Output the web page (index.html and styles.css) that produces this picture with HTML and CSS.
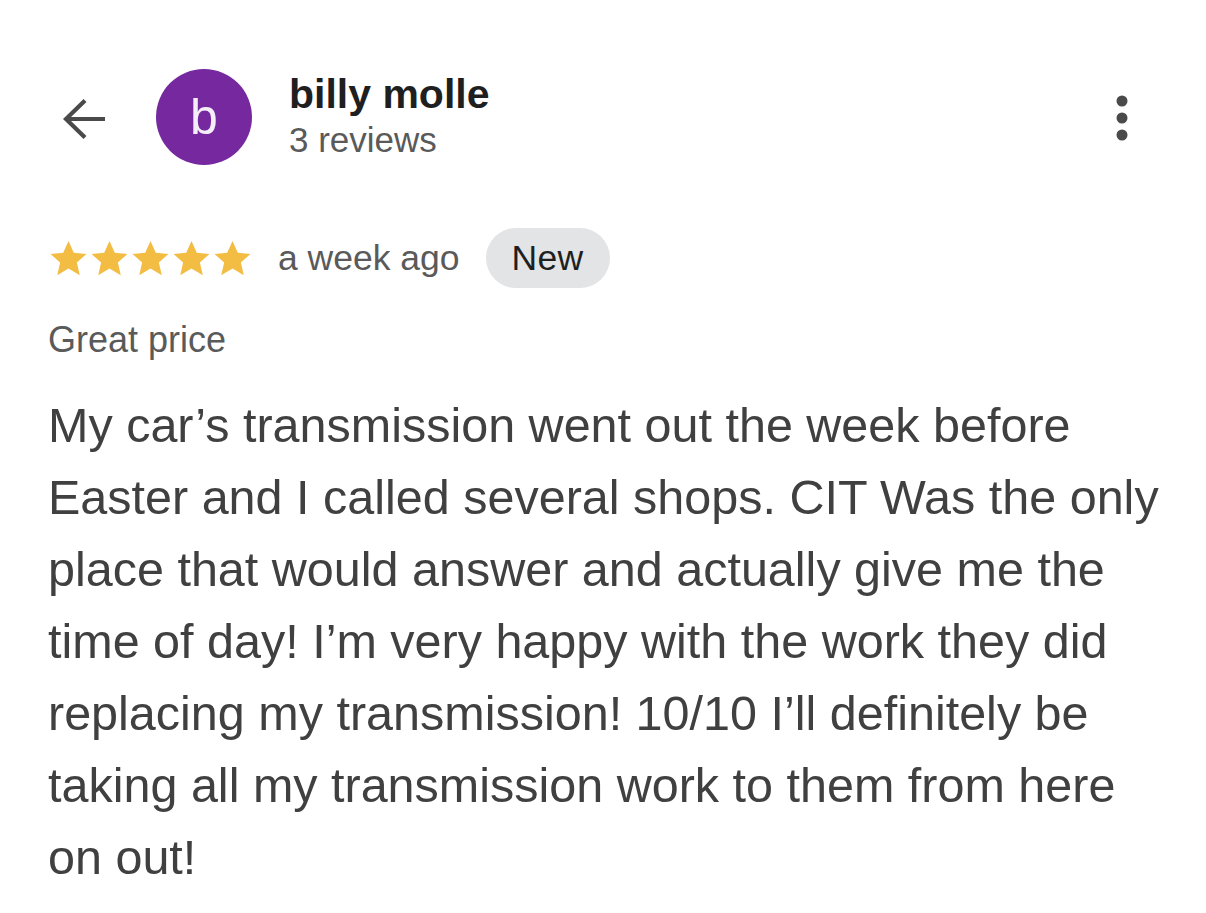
FILE: index.html
```html
<!DOCTYPE html>
<html>
<head>
<meta charset="utf-8">
<link rel="stylesheet" href="styles.css">
</head>
<body>
<div class="page">
  <header class="header">
    <svg class="back" viewBox="0 0 48 48" width="48" height="48"><path d="M45 24H8M25 5.5L6 24l19 18.5" fill="none" stroke="#4a4a4a" stroke-width="4.2" stroke-linecap="butt" stroke-linejoin="miter"/></svg>
    <div class="avatar">b</div>
    <div class="who">
      <div class="name">billy molle</div>
      <div class="count">3 reviews</div>
    </div>
    <svg class="more" viewBox="0 0 12 46" width="12" height="46"><circle cx="6" cy="6" r="5.5" fill="#4a4a4a"/><circle cx="6" cy="23" r="5.5" fill="#4a4a4a"/><circle cx="6" cy="40" r="5.5" fill="#4a4a4a"/></svg>
  </header>
  <div class="meta">
    <div class="stars">
      <svg viewBox="0 0 24 24" width="41" height="41"><path d="M12 1.8l3.1 6.9 7.4.7-5.6 5 1.7 7.4L12 17.9l-6.6 3.9 1.7-7.4-5.6-5 7.4-.7z" fill="#f3bd44"/></svg>
      <svg viewBox="0 0 24 24" width="41" height="41"><path d="M12 1.8l3.1 6.9 7.4.7-5.6 5 1.7 7.4L12 17.9l-6.6 3.9 1.7-7.4-5.6-5 7.4-.7z" fill="#f3bd44"/></svg>
      <svg viewBox="0 0 24 24" width="41" height="41"><path d="M12 1.8l3.1 6.9 7.4.7-5.6 5 1.7 7.4L12 17.9l-6.6 3.9 1.7-7.4-5.6-5 7.4-.7z" fill="#f3bd44"/></svg>
      <svg viewBox="0 0 24 24" width="41" height="41"><path d="M12 1.8l3.1 6.9 7.4.7-5.6 5 1.7 7.4L12 17.9l-6.6 3.9 1.7-7.4-5.6-5 7.4-.7z" fill="#f3bd44"/></svg>
      <svg viewBox="0 0 24 24" width="41" height="41"><path d="M12 1.8l3.1 6.9 7.4.7-5.6 5 1.7 7.4L12 17.9l-6.6 3.9 1.7-7.4-5.6-5 7.4-.7z" fill="#f3bd44"/></svg>
    </div>
    <span class="when">a week ago</span>
    <span class="badge">New</span>
  </div>
  <div class="subtitle">Great price</div>
  <p class="body">My car’s transmission went out the week before Easter and I called several shops. CIT Was the only place that would answer and actually give me the time of day! I’m very happy with the work they did replacing my transmission! 10/10 I’ll definitely be taking all my transmission work to them from here on out!</p>
</div>
</body>
</html>
```
FILE: styles.css
```css
html, body {
  margin: 0;
  padding: 0;
  background: #ffffff;
}
body {
  font-family: "Liberation Sans", Arial, sans-serif;
  color: #3d3d3d;
}
.page {
  width: 1206px;
  height: 913px;
  overflow: hidden;
  box-sizing: border-box;
  padding: 69px 0 0 48px;
}
.header {
  display: flex;
  align-items: center;
  height: 96px;
  padding-right: 78px;
}
.back {
  margin-left: 12px;
  margin-top: 4px;
  flex: none;
}
.avatar {
  margin-left: 48px;
  width: 96px;
  height: 96px;
  border-radius: 50%;
  background: #76289f;
  color: #f4eef8;
  font-size: 50px;
  line-height: 96px;
  text-align: center;
  flex: none;
}
.who {
  margin-left: 37px;
  flex: 1;
}
.name {
  font-size: 41px;
  line-height: 44px;
  font-weight: bold;
  color: #1f1f1f;
}
.count {
  font-size: 35px;
  line-height: 47px;
  color: #5a5a5a;
}
.more {
  flex: none;
  margin-top: 2px;
}
.meta {
  display: flex;
  align-items: center;
  margin-top: 63px;
  height: 60px;
}
.stars {
  display: flex;
  gap: 0;
}
.stars svg {
  display: block;
}
.when {
  margin-left: 25px;
  font-size: 35.5px;
  color: #5a5a5a;
}
.badge {
  margin-left: 26px;
  height: 60px;
  line-height: 60px;
  padding: 0 26px;
  border-radius: 30px;
  background: #e3e4e6;
  color: #1f1f1f;
  font-size: 35.5px;
  font-weight: 500;
  letter-spacing: 0.3px;
}
.subtitle {
  margin-top: 30px;
  font-size: 36px;
  line-height: 44px;
  color: #5a5a5a;
}
.body {
  margin: 27px 0 0 0;
  width: 1125px;
  font-size: 48.5px;
  line-height: 72px;
  color: #404040;
}
```
